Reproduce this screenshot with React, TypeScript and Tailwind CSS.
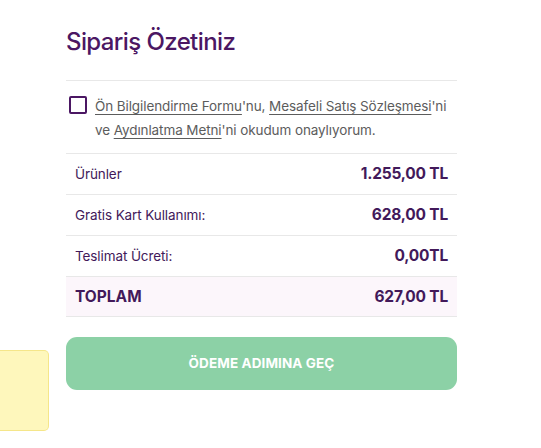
export default function App() {
  const rows = [
    { label: 'Ürünler', value: '1.255,00 TL' },
    { label: 'Gratis Kart Kullanımı:', value: '628,00 TL' },
    { label: 'Teslimat Ücreti:', value: '0,00TL' },
  ]

  return (
    <div className="relative w-[541px] h-[448px] bg-white overflow-hidden font-['Inter',sans-serif]">
      {/* left yellow tab */}
      <div className="absolute left-0 top-[350px] w-[49px] h-[81px] bg-[#fef7bc] border border-l-0 border-[#f5e68a] rounded-r-[5px]" />

      <div className="ml-[66px] w-[391px] pt-[25px]">
        <h1 className="text-[24px] leading-[34px] font-medium text-[#4b1763] tracking-[-0.6px]">Sipariş Özetiniz</h1>

        <div className="mt-[21px] border-t border-[#e8e8e8] border-b pt-[13px] pb-[11px] flex gap-[8px]">
          <div className="mt-[2px] ml-[3px] w-[18px] h-[18px] shrink-0 border-2 border-[#4b1763] rounded-[2px]" />
          <p className="text-[13.5px] leading-[24px] text-[#5c5c5c] tracking-[-0.1px]">
            <span className="underline underline-offset-[3px]">Ön Bilgilendirme Formu</span>'nu,{' '}
            <span className="underline underline-offset-[3px]">Mesafeli Satış Sözleşmesi</span>'ni
            <br />
            ve <span className="underline underline-offset-[3px]">Aydınlatma Metni</span>'ni okudum onaylıyorum.
          </p>
        </div>

        {rows.map((r) => (
          <div key={r.label} className="h-[41px] flex items-center justify-between px-[9px] border-b border-[#e8e8e8]">
            <span className="text-[13.5px] text-[#42195a] tracking-[-0.1px]">{r.label}</span>
            <span className="text-[15.5px] font-bold text-[#42195a] tracking-[-0.2px]">{r.value}</span>
          </div>
        ))}
        <div className="h-[40px] flex items-center justify-between px-[9px] bg-[#fcf6fb] border-b border-[#e8e8e8]">
          <span className="text-[15.5px] font-bold text-[#42195a]">TOPLAM</span>
          <span className="text-[15.5px] font-bold text-[#42195a] tracking-[-0.2px]">627,00 TL</span>
        </div>

        <button className="mt-[20px] w-full h-[53px] rounded-[11px] bg-[#8cd1a6] text-white text-[13.5px] font-bold tracking-[0.1px]">
          ÖDEME ADIMINA GEÇ
        </button>
      </div>
    </div>
  )
}
